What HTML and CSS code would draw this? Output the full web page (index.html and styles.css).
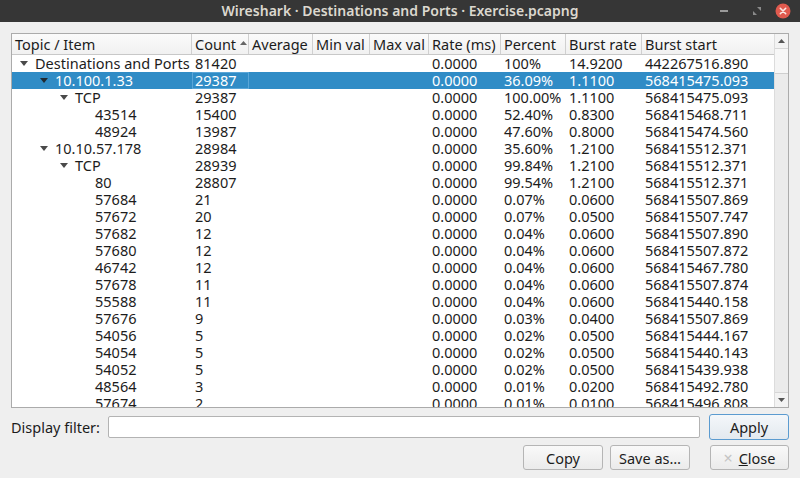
FILE: index.html
```html
<!DOCTYPE html>
<html>
<head>
<meta charset="utf-8">
<link rel="stylesheet" href="styles.css">
</head>
<body>
<div class="window">
  <div class="titlebar">
    <div></div>
    <div class="title">Wireshark · Destinations and Ports · Exercise.pcapng</div>
    <div class="wm">
      <span class="wm-btn"><svg width="8" height="2" viewBox="0 0 8 2"><rect width="8" height="2" fill="#9a9a9a"/></svg></span>
      <span class="wm-btn"><svg width="8" height="8" viewBox="0 0 8 8"><path d="M4 0h4v4z M0 4l4 4H0z" fill="#8a8a8a"/></svg></span>
      <span class="wm-close"><svg width="16" height="16" viewBox="0 0 16 16"><circle cx="8" cy="8" r="7.5" fill="#e05a4e"/><path d="M5.3 5.3l5.4 5.4M10.7 5.3l-5.4 5.4" stroke="#fbe9e6" stroke-width="1.6" stroke-linecap="round"/></svg></span>
    </div>
  </div>
  <div class="content">
    <div class="tree">
      <div class="view">
        <div class="hdr grid">
          <div class="hc">Topic / Item</div>
          <div class="hc">Count<svg class="sort" width="7" height="4" viewBox="0 0 7 4"><path d="M0 4L3.5 0L7 4z" fill="#666"/></svg></div>
          <div class="hc">Average</div>
          <div class="hc">Min val</div>
          <div class="hc">Max val</div>
          <div class="hc">Rate (ms)</div>
          <div class="hc">Percent</div>
          <div class="hc">Burst rate</div>
          <div class="hc last">Burst start</div>
        </div>
        <div class="rows">
          <div class="row grid"><div class="c topic l0"><span class="exp"><svg width="8" height="5" viewBox="0 0 8 5"><path d="M0 0h8L4 5z"/></svg></span>Destinations and Ports</div><div class="c">81420</div><div class="c"></div><div class="c"></div><div class="c"></div><div class="c">0.0000</div><div class="c">100%</div><div class="c">14.9200</div><div class="c">442267516.890</div></div>
          <div class="row grid sel"><div class="c topic l1"><span class="exp"><svg width="8" height="5" viewBox="0 0 8 5"><path d="M0 0h8L4 5z"/></svg></span>10.100.1.33</div><div class="c focus">29387</div><div class="c"></div><div class="c"></div><div class="c"></div><div class="c">0.0000</div><div class="c">36.09%</div><div class="c">1.1100</div><div class="c">568415475.093</div></div>
          <div class="row grid"><div class="c topic l2"><span class="exp"><svg width="8" height="5" viewBox="0 0 8 5"><path d="M0 0h8L4 5z"/></svg></span>TCP</div><div class="c">29387</div><div class="c"></div><div class="c"></div><div class="c"></div><div class="c">0.0000</div><div class="c">100.00%</div><div class="c">1.1100</div><div class="c">568415475.093</div></div>
          <div class="row grid"><div class="c topic l3"><span class="exp"></span>43514</div><div class="c">15400</div><div class="c"></div><div class="c"></div><div class="c"></div><div class="c">0.0000</div><div class="c">52.40%</div><div class="c">0.8300</div><div class="c">568415468.711</div></div>
          <div class="row grid"><div class="c topic l3"><span class="exp"></span>48924</div><div class="c">13987</div><div class="c"></div><div class="c"></div><div class="c"></div><div class="c">0.0000</div><div class="c">47.60%</div><div class="c">0.8000</div><div class="c">568415474.560</div></div>
          <div class="row grid"><div class="c topic l1"><span class="exp"><svg width="8" height="5" viewBox="0 0 8 5"><path d="M0 0h8L4 5z"/></svg></span>10.10.57.178</div><div class="c">28984</div><div class="c"></div><div class="c"></div><div class="c"></div><div class="c">0.0000</div><div class="c">35.60%</div><div class="c">1.2100</div><div class="c">568415512.371</div></div>
          <div class="row grid"><div class="c topic l2"><span class="exp"><svg width="8" height="5" viewBox="0 0 8 5"><path d="M0 0h8L4 5z"/></svg></span>TCP</div><div class="c">28939</div><div class="c"></div><div class="c"></div><div class="c"></div><div class="c">0.0000</div><div class="c">99.84%</div><div class="c">1.2100</div><div class="c">568415512.371</div></div>
          <div class="row grid"><div class="c topic l3"><span class="exp"></span>80</div><div class="c">28807</div><div class="c"></div><div class="c"></div><div class="c"></div><div class="c">0.0000</div><div class="c">99.54%</div><div class="c">1.2100</div><div class="c">568415512.371</div></div>
          <div class="row grid"><div class="c topic l3"><span class="exp"></span>57684</div><div class="c">21</div><div class="c"></div><div class="c"></div><div class="c"></div><div class="c">0.0000</div><div class="c">0.07%</div><div class="c">0.0600</div><div class="c">568415507.869</div></div>
          <div class="row grid"><div class="c topic l3"><span class="exp"></span>57672</div><div class="c">20</div><div class="c"></div><div class="c"></div><div class="c"></div><div class="c">0.0000</div><div class="c">0.07%</div><div class="c">0.0500</div><div class="c">568415507.747</div></div>
          <div class="row grid"><div class="c topic l3"><span class="exp"></span>57682</div><div class="c">12</div><div class="c"></div><div class="c"></div><div class="c"></div><div class="c">0.0000</div><div class="c">0.04%</div><div class="c">0.0600</div><div class="c">568415507.890</div></div>
          <div class="row grid"><div class="c topic l3"><span class="exp"></span>57680</div><div class="c">12</div><div class="c"></div><div class="c"></div><div class="c"></div><div class="c">0.0000</div><div class="c">0.04%</div><div class="c">0.0600</div><div class="c">568415507.872</div></div>
          <div class="row grid"><div class="c topic l3"><span class="exp"></span>46742</div><div class="c">12</div><div class="c"></div><div class="c"></div><div class="c"></div><div class="c">0.0000</div><div class="c">0.04%</div><div class="c">0.0600</div><div class="c">568415467.780</div></div>
          <div class="row grid"><div class="c topic l3"><span class="exp"></span>57678</div><div class="c">11</div><div class="c"></div><div class="c"></div><div class="c"></div><div class="c">0.0000</div><div class="c">0.04%</div><div class="c">0.0600</div><div class="c">568415507.874</div></div>
          <div class="row grid"><div class="c topic l3"><span class="exp"></span>55588</div><div class="c">11</div><div class="c"></div><div class="c"></div><div class="c"></div><div class="c">0.0000</div><div class="c">0.04%</div><div class="c">0.0600</div><div class="c">568415440.158</div></div>
          <div class="row grid"><div class="c topic l3"><span class="exp"></span>57676</div><div class="c">9</div><div class="c"></div><div class="c"></div><div class="c"></div><div class="c">0.0000</div><div class="c">0.03%</div><div class="c">0.0400</div><div class="c">568415507.869</div></div>
          <div class="row grid"><div class="c topic l3"><span class="exp"></span>54056</div><div class="c">5</div><div class="c"></div><div class="c"></div><div class="c"></div><div class="c">0.0000</div><div class="c">0.02%</div><div class="c">0.0500</div><div class="c">568415444.167</div></div>
          <div class="row grid"><div class="c topic l3"><span class="exp"></span>54054</div><div class="c">5</div><div class="c"></div><div class="c"></div><div class="c"></div><div class="c">0.0000</div><div class="c">0.02%</div><div class="c">0.0500</div><div class="c">568415440.143</div></div>
          <div class="row grid"><div class="c topic l3"><span class="exp"></span>54052</div><div class="c">5</div><div class="c"></div><div class="c"></div><div class="c"></div><div class="c">0.0000</div><div class="c">0.02%</div><div class="c">0.0500</div><div class="c">568415439.938</div></div>
          <div class="row grid"><div class="c topic l3"><span class="exp"></span>48564</div><div class="c">3</div><div class="c"></div><div class="c"></div><div class="c"></div><div class="c">0.0000</div><div class="c">0.01%</div><div class="c">0.0200</div><div class="c">568415492.780</div></div>
          <div class="row grid"><div class="c topic l3"><span class="exp"></span>57674</div><div class="c">2</div><div class="c"></div><div class="c"></div><div class="c"></div><div class="c">0.0000</div><div class="c">0.01%</div><div class="c">0.0100</div><div class="c">568415496.808</div></div>
        </div>
      </div>
      <div class="vscroll">
        <div class="sb-btn"><svg width="7" height="4" viewBox="0 0 7 4"><path d="M0 4L3.5 0L7 4z" fill="#555"/></svg></div>
        <div class="sb-track"><div class="sb-thumb"></div></div>
        <div class="sb-btn"><svg width="7" height="4" viewBox="0 0 7 4"><path d="M0 0h7L3.5 4z" fill="#555"/></svg></div>
      </div>
    </div>
    <div class="filter">
      <label class="flabel">Display filter:</label>
      <div class="finput"></div>
      <button class="btn apply">Apply</button>
    </div>
    <div class="buttons">
      <button class="btn">Copy</button>
      <button class="btn">Save as…</button>
      <button class="btn close"><span class="x">×</span><u>C</u>lose</button>
    </div>
  </div>
</div>
</body>
</html>
```

FILE: styles.css
```css
* { box-sizing: border-box; }
html, body { margin: 0; padding: 0; }
body {
  width: 800px;
  height: 478px;
  overflow: hidden;
  font-family: "Noto Sans", "DejaVu Sans", sans-serif;
  font-size: 14.5px;
  color: #1c1c1c;
  background: #efefef;
}
.window { display: flex; flex-direction: column; height: 478px; }

.titlebar {
  height: 22px;
  background: #363636;
  display: grid;
  grid-template-columns: 1fr auto 1fr;
  align-items: center;
}
.title {
  color: #dcd8cf;
  font-weight: 600;
  font-size: 14px;
  line-height: 22px;
  white-space: nowrap;
}
.wm { display: flex; justify-content: flex-end; align-items: center; padding-right: 9px; }
.wm-btn { width: 31px; display: flex; justify-content: center; align-items: center; }
.wm-btn:first-child { margin-right: 2px; }
.wm-btn:nth-child(2) { margin-right: 3px; }
.wm-close { display: flex; }

.content {
  flex: 1;
  display: flex;
  flex-direction: column;
  padding: 11px 11px 9px 11px;
}

.tree {
  height: 375px;
  border: 1px solid #ababab;
  background: #fff;
  display: flex;
  overflow: hidden;
}
.view { width: 762px; display: flex; flex-direction: column; overflow: hidden; }
.grid {
  display: grid;
  grid-template-columns: 180px 57px 64px 57px 59px 72px 65px 76px 132px;
}
.hdr {
  height: 21px;
  background: linear-gradient(#fbfbfb, #f1f1f1);
  border-bottom: 1px solid #c8c8c8;
}
.hc {
  border-right: 1px solid #d0d0d0;
  padding-left: 3px;
  line-height: 20px;
  white-space: nowrap;
  display: flex;
  align-items: center;
}
.hc.last { border-right: none; }
.sort { margin-left: 4px; margin-top: -3px; }

.rows { flex: 1; overflow: hidden; }
.row { height: 17px; line-height: 17px; }
.c { padding-left: 3px; white-space: nowrap; }
.topic { display: flex; align-items: center; padding-left: 3px; }
.l1 { padding-left: 23px; }
.l2 { padding-left: 43px; }
.l3 { padding-left: 63px; }
.exp { width: 20px; flex: none; display: flex; align-items: center; padding-left: 5px; height: 17px; }
.exp svg path { fill: #4a4a4a; }
.sel { background: #308cc6; color: #fff; }
.sel .exp svg path { fill: #1f2a33; }
.focus { box-shadow: inset 0 0 0 1px #5aa6d8; }

.vscroll {
  width: 14px;
  border-left: 1px solid #dcdcdc;
  background: #ebebeb;
  display: flex;
  flex-direction: column;
}
.sb-btn { height: 15px; display: flex; align-items: center; justify-content: center; background: #f3f3f3; }
.sb-btn:first-child { border-bottom: 1px solid #d6d6d6; }
.sb-btn:last-child { border-top: 1px solid #d6d6d6; }
.sb-track { flex: 1; }
.sb-thumb { height: 25px; background: #f7f7f7; border-bottom: 1px solid #cfcfcf; }

.filter {
  display: flex;
  align-items: center;
  margin-top: 6px;
  height: 26px;
}
.flabel { margin-right: 8px; white-space: nowrap; }
.finput {
  flex: 1;
  height: 22px;
  background: #fff;
  border: 1px solid #b3b3b3;
  border-radius: 2px;
  margin-right: 9px;
}
.btn {
  font-family: inherit;
  font-size: 14.5px;
  color: #1c1c1c;
  width: 80px;
  height: 25px;
  padding: 0;
  background: linear-gradient(#f9f9f9, #ebebeb);
  border: 1px solid #b5b5b5;
  border-radius: 3px;
  display: flex;
  align-items: center;
  justify-content: center;
}
.apply {
  height: 26px;
  border-color: #5b9bd0;
  background: linear-gradient(#f4f7fa, #e3e9ef);
}
.buttons {
  display: flex;
  justify-content: flex-end;
  gap: 7px;
  margin-top: 5px;
}
.btn.close { margin-left: 13px; width: 79px; }
.x { color: #c4c4c4; margin-right: 6px; font-size: 16px; }
```
